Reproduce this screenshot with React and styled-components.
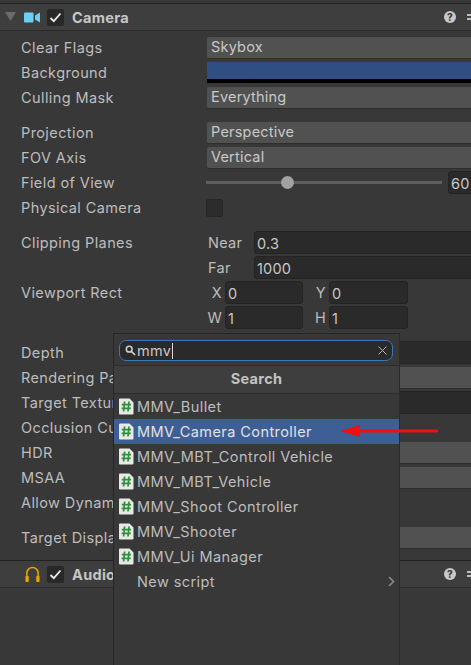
import React from 'react';
import styled, { createGlobalStyle } from 'styled-components';

const GlobalStyle = createGlobalStyle`
  html, body {
    margin: 0;
    padding: 0;
    background: #383838;
  }
  body {
    font-family: Inter, "Noto Sans", sans-serif;
    font-size: 14.5px;
    color: #c2c2c2;
  }
`;

const Page = styled.div`
  position: relative;
  width: 471px;
  height: 665px;
  overflow: hidden;
  background: #383838;
`;

const Header = styled.div`
  display: flex;
  align-items: center;
  height: 26px;
  background: #3e3e3e;
  border-top: 1px solid #222;
  border-bottom: 1px solid #2a2a2a;
  box-sizing: content-box;
  padding-left: ${(p) => p.$left}px;
  margin-top: ${(p) => p.$top}px;
`;

const Title = styled.span`
  font-weight: 700;
  margin-left: 8px;
  letter-spacing: 0.3px;
  color: #c6c6c6;
  ${(p) => p.$clip && `
    width: ${p.$clip}px;
    overflow: hidden;
    white-space: nowrap;
  `}
`;

const Toggle = styled.span`
  display: flex;
  align-items: center;
  justify-content: center;
  width: 17px;
  height: 17px;
  margin-left: 7px;
  border-radius: 2px;
  background: #282828;
`;

const HelpDot = styled.span`
  position: absolute;
  left: 444px;
  width: 12px;
  height: 12px;
  border-radius: 50%;
  background: #c8c8c8;
  color: #3a3a3a;
  font-size: 10px;
  font-weight: 800;
  line-height: 12px;
  text-align: center;
`;

const MenuDots = styled.span`
  position: absolute;
  left: 467px;
  width: 4px;
  height: 2px;
  border-top: 2px solid #bdbdbd;
  border-bottom: 2px solid #bdbdbd;
`;

const Body = styled.div`
  padding-top: 4px;
`;

const Group = styled.div`
  margin-bottom: 10px;
`;

const Row = styled.div`
  display: grid;
  grid-template-columns: 186px 1fr;
  align-items: center;
  height: 25px;
  padding-left: 21px;
  white-space: nowrap;
`;

const Label = styled.span`
  letter-spacing: 0.4px;
  color: #bdbdbd;
  ${(p) => p.$clip && `
    width: 92px;
    overflow: hidden;
  `}
`;

const Dropdown = styled.div`
  height: 22px;
  width: 290px;
  box-sizing: border-box;
  padding-left: 4px;
  line-height: 20px;
  background: #515151;
  border-bottom: 1px solid #2e2e2e;
  border-radius: 2px 0 0 2px;
  letter-spacing: 0.2px;
  color: #c8c8c8;
`;

const Field = styled.div`
  height: 23px;
  width: ${(p) => p.$width}px;
  flex: none;
  box-sizing: border-box;
  padding-left: 2px;
  line-height: 23px;
  background: #2a2a2a;
  border: 1px solid #232323;
  border-radius: 3px;
  color: #c8c8c8;
  letter-spacing: 0.2px;
`;

const Swatch = styled.div`
  height: 21px;
  width: 290px;
  box-sizing: border-box;
  background: #2f4f82;
  border-bottom: 4px solid #000;
`;

const SliderRow = styled.div`
  display: flex;
  align-items: center;
  margin-left: -1px;
`;

const Track = styled.div`
  position: relative;
  width: 236px;
  height: 3px;
  margin-right: 6px;
  background: #5e5e5e;
`;

const Thumb = styled.span`
  position: absolute;
  left: 75px;
  top: -5px;
  width: 13px;
  height: 13px;
  border-radius: 50%;
  background: #a2a2a2;
`;

const Check = styled.div`
  width: 17px;
  height: 18px;
  margin-left: -1px;
  border-radius: 2px;
  background: #2c2c2c;
  border: 1px solid #262626;
  box-sizing: border-box;
`;

const Pair = styled.div`
  display: flex;
  align-items: center;
`;

const PairLabel = styled.span`
  width: ${(p) => p.$width}px;
  margin-left: ${(p) => p.$left || 0}px;
  color: #bdbdbd;
  letter-spacing: 0.3px;
  text-align: ${(p) => p.$align || 'left'};
  padding-right: ${(p) => (p.$align ? 3 : 0)}px;
  box-sizing: border-box;
  flex: none;
`;

const Popup = styled.div`
  position: absolute;
  left: 113px;
  top: 333px;
  width: 287px;
  height: 340px;
  box-sizing: border-box;
  background: #383838;
  border: 1px solid #262626;
  border-right-color: #2b2b2b;
`;

const SearchBox = styled.div`
  display: flex;
  align-items: center;
  height: 21px;
  margin: 6px 6px 4px 5px;
  padding: 0 5px 0 5px;
  box-sizing: border-box;
  background: #2a2a2a;
  border: 1px solid #3b78b5;
  border-radius: 7px;
`;

const SearchText = styled.span`
  flex: 1;
  margin-left: 1px;
  line-height: 18px;
  letter-spacing: 0.3px;
  color: #c8c8c8;
`;

const Caret = styled.span`
  display: inline-block;
  width: 1px;
  height: 16px;
  margin-left: 1px;
  vertical-align: -3px;
  background: #d8d8d8;
`;

const SearchTitle = styled.div`
  height: 27px;
  line-height: 25px;
  text-align: center;
  font-weight: 700;
  letter-spacing: 0.3px;
  background: #3e3e3e;
  border-top: 1px solid #2c2c2c;
  border-bottom: 1px solid #2c2c2c;
  color: #c2c2c2;
`;

const Item = styled.div`
  display: flex;
  align-items: center;
  height: 25px;
  padding-left: 5px;
  letter-spacing: 0.42px;
  background: ${(p) => (p.$active ? '#3e5f96' : 'transparent')};
  color: ${(p) => (p.$active ? '#e2e2e2' : '#bdbdbd')};
`;

const ItemName = styled.span`
  margin-left: ${(p) => p.$left || 3}px;
  flex: 1;
`;

const Chevron = styled.svg`
  margin-right: 4px;
`;

const Arrow = styled.svg`
  position: absolute;
  left: 338px;
  top: 424px;
`;

const CameraIcon = () => (
  <svg width="16" height="11" viewBox="0 0 16 11" style={{ marginLeft: 7 }}>
    <rect x="0" y="0.5" width="9.5" height="10" rx="1" fill="#6ccdf5" />
    <path d="M11 3.5 L16 0.5 V10.5 L11 7.5 Z" fill="#6ccdf5" />
  </svg>
);

const Headphones = () => (
  <svg width="15" height="19" viewBox="0 0 16 19" style={{ marginLeft: 8 }}>
    <path d="M2 12 V8 a6 6 0 0 1 12 0 V12" fill="none" stroke="#e6a800" strokeWidth="1.6" />
    <rect x="0.5" y="11" width="3.5" height="6.5" rx="1" fill="#e6a800" />
    <rect x="12" y="11" width="3.5" height="6.5" rx="1" fill="#e6a800" />
  </svg>
);

const Tick = () => (
  <svg width="13" height="11" viewBox="0 0 13 11">
    <path d="M1.5 6 L4.8 9.2 L11.5 1.5" fill="none" stroke="#eaeaea" strokeWidth="1.8" />
  </svg>
);

const Fold = () => (
  <svg width="12" height="10" viewBox="0 0 12 10" style={{ marginLeft: 5 }}>
    <path d="M0 0 H11 L5.5 9 Z" fill="#6a6a6a" />
  </svg>
);

const ScriptIcon = () => (
  <svg width="15" height="17" viewBox="0 0 15 17">
    <path d="M1 0.5 H10.5 L14.5 4.5 V15.5 a1 1 0 0 1 -1 1 H1 a1 1 0 0 1 -1 -1 V1.5 a1 1 0 0 1 1 -1 Z" fill="#e8e8e4" />
    <path d="M5.6 3.5 L4.6 13.5 M10 3.5 L9 13.5 M2.8 6.7 H12 M2.6 10.3 H11.8" fill="none" stroke="#2f8f3f" strokeWidth="1.7" />
  </svg>
);

const Magnifier = () => (
  <svg width="11" height="11" viewBox="0 0 11 11">
    <circle cx="4.2" cy="4.2" r="2.9" fill="none" stroke="#d0d0d0" strokeWidth="1.5" />
    <path d="M6.5 6.5 L10 10" stroke="#d0d0d0" strokeWidth="1.7" />
  </svg>
);

const Clear = () => (
  <svg width="9" height="9" viewBox="0 0 9 9">
    <path d="M0.5 0.5 L8.5 8.5 M8.5 0.5 L0.5 8.5" stroke="#b4b4b4" strokeWidth="1" />
  </svg>
);

const ComponentHeader = ({ icon, title, top, left, clip }) => (
  <Header $top={top} $left={left}>
    {icon}
    <Toggle><Tick /></Toggle>
    <Title $clip={clip}>{title}</Title>
    <HelpDot>?</HelpDot>
    <MenuDots />
  </Header>
);

const scripts = [
  'MMV_Bullet',
  'MMV_Camera Controller',
  'MMV_MBT_Controll Vehicle',
  'MMV_MBT_Vehicle',
  'MMV_Shoot Controller',
  'MMV_Shooter',
  'MMV_Ui Manager',
];

export default function App() {
  return (
    <Page>
      <GlobalStyle />
      <ComponentHeader top={3} left={0} title="Camera" icon={<><Fold /><CameraIcon /></>} />
      <Body>
        <Group>
          <Row><Label>Clear Flags</Label><Dropdown>Skybox</Dropdown></Row>
          <Row><Label>Background</Label><Swatch /></Row>
          <Row><Label>Culling Mask</Label><Dropdown>Everything</Dropdown></Row>
        </Group>
        <Group>
          <Row><Label>Projection</Label><Dropdown>Perspective</Dropdown></Row>
          <Row><Label>FOV Axis</Label><Dropdown>Vertical</Dropdown></Row>
          <Row>
            <Label>Field of View</Label>
            <SliderRow>
              <Track><Thumb /></Track>
              <Field $width={60}>60</Field>
            </SliderRow>
          </Row>
          <Row><Label>Physical Camera</Label><Check /></Row>
        </Group>
        <Group>
          <Row>
            <Label>Clipping Planes</Label>
            <Pair><PairLabel $width={46} $left={1}>Near</PairLabel><Field $width={240}>0.3</Field></Pair>
          </Row>
          <Row>
            <Label />
            <Pair><PairLabel $width={46} $left={1}>Far</PairLabel><Field $width={240}>1000</Field></Pair>
          </Row>
          <Row>
            <Label>Viewport Rect</Label>
            <Pair>
              <PairLabel $width={18} $align="right">X</PairLabel><Field $width={78}>0</Field>
              <PairLabel $width={26} $align="right">Y</PairLabel><Field $width={79}>0</Field>
            </Pair>
          </Row>
          <Row>
            <Label />
            <Pair>
              <PairLabel $width={18} $align="right">W</PairLabel><Field $width={78}>1</Field>
              <PairLabel $width={26} $align="right">H</PairLabel><Field $width={79}>1</Field>
            </Pair>
          </Row>
        </Group>
        <Group>
          <Row><Label>Depth</Label><Field $width={290} /></Row>
          <Row><Label $clip>Rendering Path</Label><Dropdown /></Row>
          <Row><Label $clip>Target Texture</Label><Field $width={290} /></Row>
          <Row><Label $clip>Occlusion Culling</Label><span /></Row>
          <Row><Label>HDR</Label><Dropdown /></Row>
          <Row><Label>MSAA</Label><Dropdown /></Row>
          <Row><Label $clip>Allow Dynamic Resolution</Label><span /></Row>
        </Group>
        <Group>
          <Row><Label $clip>Target Display</Label><Dropdown /></Row>
        </Group>
      </Body>
      <ComponentHeader top={0} left={17} clip={41} title="Audio Listener" icon={<Headphones />} />

      <Popup>
        <SearchBox>
          <Magnifier />
          <SearchText>mmv<Caret /></SearchText>
          <Clear />
        </SearchBox>
        <SearchTitle>Search</SearchTitle>
        {scripts.map((name) => (
          <Item key={name} $active={name === 'MMV_Camera Controller'}>
            <ScriptIcon />
            <ItemName>{name}</ItemName>
          </Item>
        ))}
        <Item>
          <ItemName $left={18}>New script</ItemName>
          <Chevron width="7" height="11" viewBox="0 0 7 11">
            <path d="M1 1 L5.5 5.5 L1 10" fill="none" stroke="#8a8a8a" strokeWidth="1.6" />
          </Chevron>
        </Item>
      </Popup>

      <Arrow width="102" height="14" viewBox="0 0 102 14">
        <path d="M2 7 L22 1 V5.5 H100 V8.5 H22 V13 Z" fill="#f01010" />
      </Arrow>
    </Page>
  );
}
